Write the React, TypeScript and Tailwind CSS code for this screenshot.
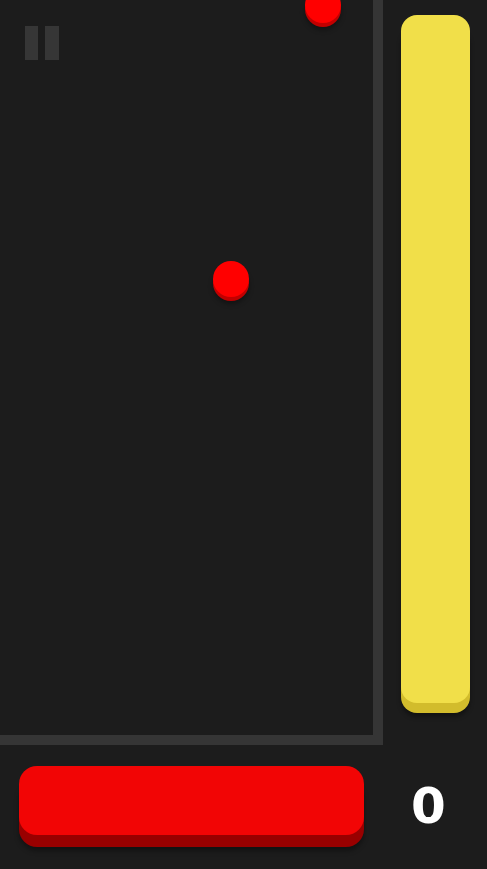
type BallProps = {
  x: number;
  y: number;
};

function Ball({ x, y }: BallProps) {
  return (
    <div
      className="absolute h-[36px] w-[36px] rounded-full bg-[#ff0000] shadow-[0_4px_0_#c20000,0_7px_5px_rgba(0,0,0,0.35)]"
      style={{ left: x, top: y }}
    />
  );
}

const BALLS: BallProps[] = [
  { x: 213, y: 261 },
  { x: 305, y: -13 },
];

export default function App() {
  return (
    <div className="flex h-[869px] w-full flex-col overflow-hidden bg-[#1c1c1c] font-['DejaVu_Sans',sans-serif]">
      <div className="flex h-[745px] shrink-0">
        <div className="relative h-[745px] w-[383px] shrink-0 border-b-[10px] border-r-[10px] border-[#353535]">
          <button className="absolute left-[25px] top-[26px] flex gap-[7px]" aria-label="Pause">
            <span className="block h-[34px] w-[13px] bg-[#363636]" />
            <span className="block h-[34px] w-[14px] bg-[#363636]" />
          </button>
          {BALLS.map((b, i) => (
            <Ball key={i} x={b.x} y={b.y} />
          ))}
        </div>
        <div className="pl-[18px] pt-[15px]">
          <div className="h-[688px] w-[69px] rounded-[16px] bg-[#f1df49] shadow-[0_10px_0_#d2bc2c,0_14px_4px_rgba(0,0,0,0.35)]" />
        </div>
      </div>
      <div className="flex items-start pt-[21px]">
        <div className="ml-[19px] h-[69px] w-[345px] shrink-0 rounded-[18px] bg-[#f20505] shadow-[0_12px_0_#990000,0_16px_5px_rgba(0,0,0,0.35)]" />
        <div className="flex flex-1 justify-center pl-[6px] pt-[10px] text-[50px] font-bold leading-[60px] text-white">
          0
        </div>
      </div>
    </div>
  );
}
